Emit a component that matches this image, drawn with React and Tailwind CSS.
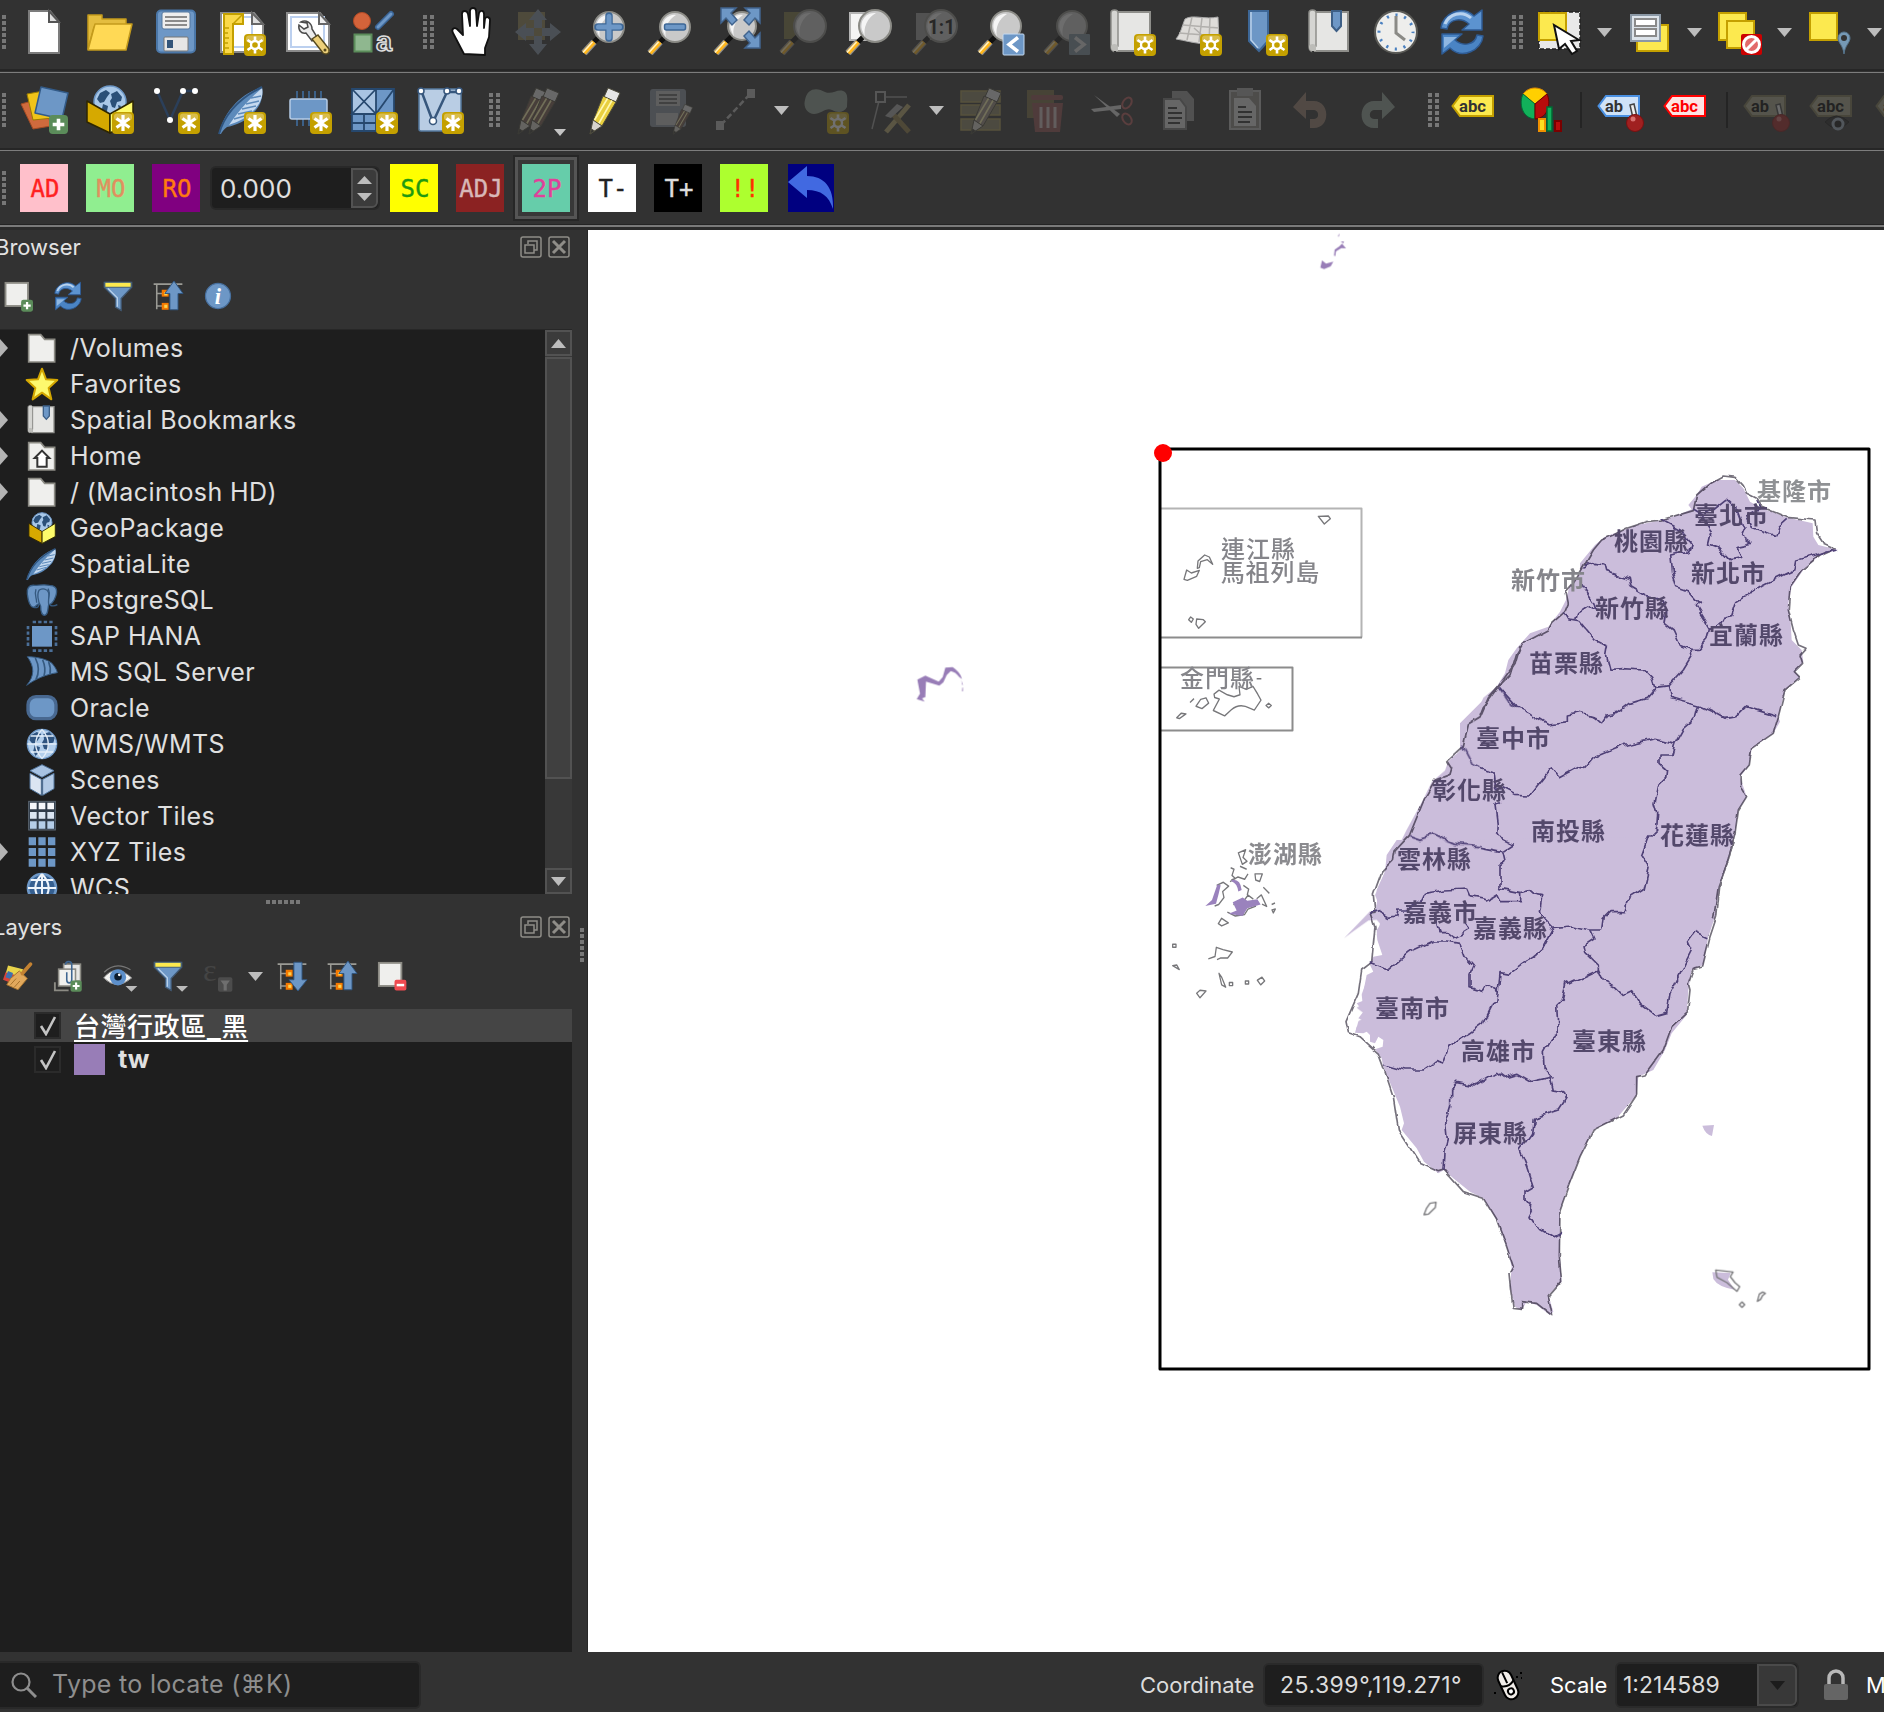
import React from "react";

const Svg = ({ size = 48, dim = false, children }) => (
  <svg
    width={size}
    height={size}
    viewBox="0 0 48 48"
    className={dim ? "shrink-0 overflow-visible opacity-30" : "shrink-0 overflow-visible"}
  >
    {children}
  </svg>
);

/* ---------- shared icon parts ---------- */
const Badge = () => (
  <g>
    <rect x="26" y="26" width="22" height="22" rx="4" fill="#c4a000" />
    <rect x="28" y="27.500" width="18" height="7" rx="3" fill="#d9bd4a" />
    <path d="M37 29v16M30.500 32.500l13 9M43.500 32.500l-13 9" stroke="#fff" strokeWidth="3.200" />
  </g>
);
const SunBadge = () => (
  <g>
    <rect x="26" y="26" width="22" height="22" rx="4" fill="#c4a000" />
    <rect x="28" y="27.500" width="18" height="7" rx="3" fill="#d9bd4a" />
    <path d="M37 28.500v17M29.500 32l15 10M44.500 32l-15 10" stroke="#fff" strokeWidth="2.600" />
    <circle cx="37" cy="37" r="4" fill="#c4a000" stroke="#fff" strokeWidth="2.400" />
  </g>
);
const PlusBadge = ({ x = 30, y = 30, s = 18 }) => (
  <g transform={`translate(${x} ${y}) scale(${s / 18})`}>
    <rect width="18" height="18" rx="3.500" fill="#5b8c5a" />
    <path d="M9 3.500v11M3.500 9h11" stroke="#fff" strokeWidth="3.400" />
  </g>
);
const Lens = ({ cx = 29, cy = 19, r = 15 }) => (
  <g>
    <path d="M19 29l-6 6" stroke="#111" strokeWidth="5" strokeLinecap="round" />
    <path d="M14 34L4 45" stroke="#8d8d8d" strokeWidth="7" />
    <path d="M14 34L4 45" stroke="#ffb61c" strokeWidth="4.500" />
    <path d="M12.500 34L3 44.500" stroke="#fff3c8" strokeWidth="1.500" />
    <circle cx={cx} cy={cy} r={r} fill="#c9c9c9" stroke="#8b8b86" strokeWidth="2" />
    <path d={`M${cx - r + 3} ${cy + 4}a${r - 3} ${r - 3} 0 0 1 ${r - 2} -${r + 1}a${r + 6} ${r + 6} 0 0 0 -${r - 5} ${r + 8}z`} fill="#f5f5f5" />
  </g>
);
const Globe = ({ cx = 24, cy = 14, r = 14 }) => (
  <g>
    <circle cx={cx} cy={cy} r={r} fill="#a9c8e8" stroke="#6d97c6" strokeWidth="1.500" />
    <g transform={`translate(${cx - 14} ${cy - 14})`} fill="#2b5078">
      <path d="M4 5l6-3 4 3-3 4-3 5-4 1-3-4z" />
      <path d="M7 16l5 2-1 5-3 3-2-5z" />
      <path d="M15 6l6-3 5 6-1 4-4 1-2 6-3-1-2-6 2-3z" />
      <path d="M22 17l3 1-2 4z" />
    </g>
  </g>
);
const BoxBody = () => (
  <g stroke="#2e2600" strokeWidth="1.500" strokeLinejoin="round">
    <path d="M1 15l23 13v19L1 36z" fill="#d6a900" />
    <path d="M47 15L24 28v19l23-11z" fill="#fdfb6b" />
  </g>
);
const Pencil = ({ body = "#e8cf3f" }) => (
  <g stroke="#4d4b3c" strokeWidth="1">
    <path d="M32 2l12 5-4 9-12-5z" fill="#e6e6e6" />
    <path d="M27 10l13 6-14 24-9-5z" fill={body} />
    <path d="M31.500 12.500L18.500 34M36 14.500L22.500 38" stroke="#fff8b0" strokeWidth="1.600" />
    <path d="M17 34l9 6-12 8z" fill="#d8d4cc" />
    <path d="M15.500 43l3 2-4.500 3z" fill="#333" />
  </g>
);
const Feather = () => (
  <g>
    <path d="M1 48C5 30 18 10 44 1c2 10-2 20-9 26-7 8-16 12-26 14-3 2-5 5-6 7z" fill="#5c8abb" />
    <path d="M44 2c2 9-3 18-10 24-7 7-15 10-23 13C20 26 30 14 44 2z" fill="#c5d9ef" />
    <path d="M16 33l14-4M20 28l14-3M24 23l14-3M28 18l13-3M33 12l10-2" stroke="#5c8abb" strokeWidth="1.500" />
    <path d="M1 48C6 30 20 13 44 1" fill="none" stroke="#2f5580" strokeWidth="2" />
  </g>
);
const Refresh = () => (
  <g strokeLinejoin="round">
    <path d="M3 20C4 6 24-4 36 8l8-6v20H24l7-6C23 9 11 11 9 21z" fill="#5c93d0" stroke="#2e5b94" strokeWidth="1.500" />
    <path d="M45 28C44 42 24 52 12 40l-8 6V26h20l-7 6c8 7 20 5 22-5z" fill="#4a84c4" stroke="#2e5b94" strokeWidth="1.500" />
    <path d="M7 16C11 6 24 2 33 10" fill="none" stroke="#b8d2ee" strokeWidth="3" />
    <path d="M6 40V29h13z" fill="#8fb7e2" />
  </g>
);
const Funnel = () => (
  <g>
    <path d="M2 2h44v8L29 28v19l-9-5V28L2 10z" fill="#6d97c6" stroke="#415a75" strokeWidth="2" />
    <path d="M8 12l15 15v14" fill="none" stroke="#b9d1ea" strokeWidth="2" />
    <rect x="3" y="2" width="42" height="8" fill="#fce94f" stroke="#3b5878" strokeWidth="1.500" />
  </g>
);
const Tree = ({ down }) => (
  <g>
    <path d="M1 5h46M6 5v40M6 20h12M6 40h12" fill="none" stroke="#9b9b95" strokeWidth="2.500" />
    <rect x="14" y="14" width="11" height="11" fill="#f57900" />
    <rect x="14" y="35" width="11" height="11" fill="#f57900" />
    <rect x="18" y="18" width="5" height="5" fill="#fcd34f" />
    <rect x="18" y="38" width="5" height="5" fill="#fcd34f" />
    {down ? (
      <path d="M27 2h13v28h8L33.500 48 19 30h8z" fill="#6d97c6" stroke="#2f5580" strokeWidth="1.500" />
    ) : (
      <path d="M27 46h13V20h8L33.500 0 19 20h8z" fill="#6d97c6" stroke="#2f5580" strokeWidth="1.500" />
    )}
  </g>
);
const Scroll = () => (
  <g>
    <path d="M9 4h33v39H9z" fill="#e6e6e4" stroke="#8e8e8a" strokeWidth="2" />
    <path d="M3 5c0-4 7-4 7 0v33c-4 0-6 2-5 5-2-1-2-3-2-5z" fill="#d5d5d2" stroke="#8e8e8a" strokeWidth="1.500" />
    <path d="M3 39c0-4 7-4 7 0v4H6c-2 0-3-2-3-4z" fill="#bdbdb9" />
  </g>
);
const Yellow = ({ x, y, w = 27, h = 27 }) => (
  <rect x={x} y={y} width={w} height={h} fill="#fce94f" stroke="#c4a000" strokeWidth="2" />
);
const Tag = ({ fill, stroke, text, label = "#333" }) => (
  <g>
    <path d="M9 10h33v20H9L1.500 20z" fill={fill} stroke={stroke} strokeWidth="2" />
    <text x="8" y="26" fontSize="16" fontWeight="700" fill={label} fontFamily="Roboto, sans-serif" textLength={text === "ab" ? 18 : 27} lengthAdjust="spacingAndGlyphs">
      {text}
    </text>
  </g>
);
const Pin = () => (
  <g>
    <path d="M29 19l4-1 3 13-4 1z" fill="#eee" stroke="#444" strokeWidth="1.500" />
    <circle cx="34" cy="37" r="8.500" fill="#a02020" stroke="#7a1010" strokeWidth="1" />
    <circle cx="32" cy="33" r="2.500" fill="#d87070" />
  </g>
);

/* ---------- toolbar icons ---------- */
const icons = {
  newDoc: (
    <g>
      <path d="M9 3h21l9 11v31H9z" fill="#fff" stroke="#7c7c7c" strokeWidth="2" />
      <path d="M29 3v11h10z" fill="#ddd" stroke="#555" strokeWidth="2" />
    </g>
  ),
  folder: (
    <g stroke="#c49b1c" strokeWidth="1.500" strokeLinejoin="round">
      <path d="M2 7h14v4h24v8H8L2 41z" fill="#e4bd3f" />
      <path d="M9 16h37l-6 26H2z" fill="#ffd955" />
    </g>
  ),
  save: (
    <g>
      <rect x="5" y="2.500" width="38" height="42" rx="4" fill="#6d97c6" stroke="#4b77a8" strokeWidth="2" />
      <rect x="10" y="4" width="28" height="17" rx="2" fill="#eee" stroke="#55789f" />
      <path d="M13 9h22M13 13h22M13 17h22" stroke="#6b6b6b" strokeWidth="1.500" />
      <rect x="12" y="29" width="24" height="14" rx="1" fill="#e6e6e6" stroke="#777" />
      <rect x="15" y="32" width="6" height="8" fill="#33557a" />
    </g>
  ),
  newLayout: (
    <g>
      <path d="M3 5h33l9 11v28H3z" fill="#fff" stroke="#8b8b8b" strokeWidth="2" />
      <path d="M7 9h27v30H7z" fill="none" stroke="#bcd0ef" strokeWidth="2" />
      <path d="M34 5v11h11z" fill="#ddd" stroke="#666" strokeWidth="2" />
      <path d="M6 6h19v10H15v30H6z" fill="#fbd949" stroke="#c4a000" strokeWidth="2" />
      <path d="M24 7L15 16M6 20h5M6 25h4M6 30h5M6 35h4M6 40h5" stroke="#c4a000" strokeWidth="1.500" />
      <SunBadge />
    </g>
  ),
  layoutMgr: (
    <g>
      <path d="M3 5h33l9 11v27H3z" fill="#fff" stroke="#8b8b8b" strokeWidth="2" />
      <path d="M7 9h33v30H7z" fill="none" stroke="#bcd0ef" strokeWidth="2" />
      <path d="M35 5v11h10z" fill="#eee" stroke="#666" strokeWidth="2" />
      <path d="M17 14c5-3 11 1 11 7l5 8-5 4-6-8c-5 1-8-3-7-8l5 4 4-2-1-4z" fill="#ececec" stroke="#4c4c4c" strokeWidth="1.500" />
      <path d="M28 31l6-4 11 14c1 5-3 6-6 4z" fill="#edd07a" stroke="#574a1e" strokeWidth="1.500" />
      <circle cx="41" cy="42" r="1.500" fill="#574a1e" />
    </g>
  ),
  style: (
    <g>
      <circle cx="12" cy="13" r="8.500" fill="#d4633a" stroke="#b34a25" />
      <path d="M28 19L41 6" stroke="#3b6698" strokeWidth="6" strokeLinecap="round" />
      <path d="M28 19L41 6" stroke="#6d97c6" strokeWidth="3" strokeLinecap="round" />
      <rect x="4.500" y="26.500" width="17" height="17" fill="#8fb78f" stroke="#5b8c5a" strokeWidth="2" />
      <text x="26" y="43" fontSize="27" fontWeight="700" fontFamily="Liberation Sans, sans-serif" fill="#444" stroke="#ddd" strokeWidth="1.500" textLength="16" lengthAdjust="spacingAndGlyphs">a</text>
    </g>
  ),
  hand: (
    <path
      d="M16 46L5 25c-2-4 1-6 4-4l6 6-1-21c0-4 5-4 6 0l2 12 0-15c0-4 6-4 6 0l1 15 2-13c1-3 5-3 5 1l0 14 1-9c1-3 5-2 5 1l-1 17-4 11v7z"
      fill="#fff" stroke="#111" strokeWidth="1.800" strokeLinejoin="round"
    />
  ),
  pan: (
    <g>
      <rect x="4" y="4" width="27" height="28" fill="#8f8450" />
      <path d="M24 1l9 11h-5v8h-8v-8h-5zM24 47l9-11h-5v-8h-8v8h-5zM1 24l11-9v5h8v8h-8v5zM47 24l-11-9v5h-8v8h8v5z" fill="#8494a8" />
    </g>
  ),
  zoomIn: (
    <g>
      <Lens />
      <path d="M29 8v22M18 19h22" stroke="#3d6797" strokeWidth="7.500" strokeLinecap="round" />
      <path d="M29 8.500v21M18.500 19h21" stroke="#6d97c6" strokeWidth="5" strokeLinecap="round" />
    </g>
  ),
  zoomOut: (
    <g>
      <Lens />
      <rect x="18.500" y="16" width="21" height="6" rx="2" fill="#6d97c6" stroke="#3d6797" strokeWidth="1.500" />
    </g>
  ),
  zoomFull: (
    <g>
      <Lens cx={30} cy={18} r={14} />
      <g fill="#6d97c6" stroke="#41648e" strokeWidth="1.500">
        <path d="M9 0h15l-5 5 6 7-5 5-6-7-5 5z" />
        <path d="M48 0H33l5 5-6 7 5 5 6-7 5 5z" />
        <path d="M48 40H33l5-5-6-7 5-5 6 7 5-5z" />
      </g>
    </g>
  ),
  zoomSel: (
    <g>
      <rect x="6" y="4" width="26" height="27" fill="#7d7540" />
      <Lens cx={32} cy={18} r={16} />
    </g>
  ),
  zoomLayer: (
    <g>
      <rect x="6" y="5" width="26" height="27" fill="#f4f4f4" stroke="#b5b5b5" strokeWidth="2" />
      <Lens cx={31} cy={18} r={16} />
    </g>
  ),
  zoomNative: (
    <g>
      <rect x="6" y="5" width="26" height="27" fill="#999" />
      <Lens cx={31} cy={18} r={16} />
      <text x="18" y="26" fontSize="21" fontWeight="700" fontFamily="Roboto, sans-serif" fill="#111" textLength="27" lengthAdjust="spacingAndGlyphs">1:1</text>
    </g>
  ),
  zoomLast: (
    <g>
      <Lens cx={30} cy={18} r={15} />
      <rect x="27" y="26" width="21" height="21" rx="1" fill="#6d97c6" stroke="#c5d9ef" />
      <path d="M42 29.500l-9 7 9 7" fill="none" stroke="#fff" strokeWidth="3.500" />
    </g>
  ),
  zoomNext: (
    <g>
      <Lens cx={30} cy={18} r={15} />
      <rect x="27" y="26" width="21" height="21" rx="1" fill="#7c8e9c" />
      <path d="M33 29.500l9 7-9 7" fill="none" stroke="#ddd" strokeWidth="3.500" />
    </g>
  ),
  newMap: <g><Scroll /><SunBadge /></g>,
  new3d: (
    <g>
      <path d="M11 11c8-5 20 1 33-2l1 24c-12 6-26 1-43-2 5-6 6-13 9-20z" fill="#dedcd9" stroke="#aaa" />
      <path d="M9 17l36 3M5 25l38 3M18 9l-5 23M28 10l-3 24M36 10l-1 24M20 20l9 8" stroke="#b2b0ad" strokeWidth="1.500" fill="none" />
      <SunBadge />
    </g>
  ),
  newBookmark: (
    <g>
      <path d="M9 3h19v30l-9 10-10-10z" fill="#6d97c6" stroke="#3d6797" strokeWidth="2" />
      <path d="M11 4v28l7 8" stroke="#b9d1ea" strokeWidth="1.500" fill="none" />
      <SunBadge />
    </g>
  ),
  bookmark: (
    <g>
      <Scroll />
      <path d="M26 3h9v15l-4.500 5-4.500-5z" fill="#6d97c6" stroke="#3d5f86" strokeWidth="2" />
    </g>
  ),
  clock: (
    <g>
      <circle cx="24" cy="24" r="21" fill="#eeeeec" stroke="#5b5b57" strokeWidth="2" />
      <circle cx="24" cy="24" r="17" fill="none" stroke="#4a80c0" strokeWidth="3" strokeDasharray="2.200 6.700" strokeDashoffset="1.100" />
      <path d="M24 8v17l9 7" fill="none" stroke="#8a8a86" strokeWidth="3" />
    </g>
  ),
  refresh: <Refresh />,
  select: (
    <g>
      <rect x="4" y="4" width="41" height="37" fill="#e8e8e8" stroke="#222" strokeWidth="1.500" strokeDasharray="4 2" />
      <Yellow x={4} y={5} />
      <path d="M19 17l5 24 6-5 7 10 5-3-6-10 8-1z" fill="#fff" stroke="#111" strokeWidth="2" />
    </g>
  ),
  selectForm: (
    <g transform="translate(2 0)">
      <Yellow x={10} y={17} w={31} h={26} />
      <rect x="4" y="7" width="29" height="26" fill="#dce3ea" stroke="#8b98a5" strokeWidth="2" />
      <path d="M8 11h21v7H8zM8 21h21v7H8z" fill="#fff" stroke="#8a8a8a" strokeWidth="2" />
    </g>
  ),
  deselect: (
    <g>
      <Yellow x={4} y={5} />
      <Yellow x={12} y={13} />
      <rect x="26" y="26" width="21" height="21" rx="2" fill="#cc0000" />
      <circle cx="36.500" cy="36.500" r="8" fill="#e26a6a" stroke="#fff" strokeWidth="3" />
      <path d="M31 42l11-11" stroke="#fff" strokeWidth="3" />
    </g>
  ),
  selectLoc: (
    <g>
      <Yellow x={5} y={5} />
      <path d="M39 46c-1-9-6-11-6-16a6 6 0 0 1 12 0c0 5-5 7-6 16z" fill="#7699b5" stroke="#56748c" />
      <circle cx="39" cy="30" r="3" fill="#333" />
    </g>
  ),
  dataSource: (
    <g strokeLinejoin="round">
      <path d="M1 18l22-6 8 28-18 3z" fill="#cf6a3d" stroke="#a24b23" strokeWidth="1" />
      <path d="M7 8l22-4 4 28-20 2z" fill="#f0c419" stroke="#9b7c00" strokeWidth="1" />
      <path d="M21 1l27 6-6 26-27-6z" fill="#6d97c6" stroke="#335b88" strokeWidth="1.500" />
      <PlusBadge x={29} y={29} s={19} />
    </g>
  ),
  geopackage: <g><Globe cx={24} cy={16} r={16} /><BoxBody /><Badge /></g>,
  shapefile: (
    <g>
      <path d="M5 5l13 29L31 5h12" fill="none" stroke="#2b3f5a" strokeWidth="2.500" />
      <g fill="#fff"><circle cx="5" cy="5" r="3" /><circle cx="18" cy="34" r="3" /><circle cx="31" cy="5" r="3" /><circle cx="43" cy="5" r="3" /></g>
      <Badge />
    </g>
  ),
  spatialite: <g><Feather /><Badge /></g>,
  memory: (
    <g>
      <path d="M13 12V5M19 12V5M25 12V5M31 12V5M37 12V5M13 33v7M19 33v7M25 33v7" stroke="#3c6087" strokeWidth="2" />
      <rect x="6" y="13" width="37" height="20" rx="2" fill="#6d97c6" stroke="#b5cce6" strokeWidth="1.500" />
      <Badge />
    </g>
  ),
  mesh: (
    <g>
      <path d="M2 3h42v42H2z" fill="#6d97c6" />
      <path d="M2 3h24v25H2z" fill="#a9c4e2" />
      <path d="M2 3h42v42H2zM26 3v42M2 28h42M2 3l24 25L2 28 26 3M26 28L44 3M14 28v17M2 37h24" fill="none" stroke="#26486e" strokeWidth="1.800" />
      <Badge />
    </g>
  ),
  virtual: (
    <g>
      <rect x="3" y="3" width="42" height="42" rx="2" fill="#b9cde4" stroke="#55799f" strokeWidth="1.500" />
      <path d="M5 4l12 32L31 6l12 0" fill="none" stroke="#37577d" strokeWidth="2.500" />
      <g fill="#fff" stroke="#37577d" strokeWidth="1.500"><circle cx="5" cy="5" r="3" /><circle cx="17" cy="35" r="3.500" /><circle cx="31" cy="5" r="3" /><circle cx="43" cy="5" r="3" /></g>
      <Badge />
    </g>
  ),
  pencils: (
    <g>
      <g transform="translate(-11 0)"><Pencil body="#7a5a4e" /></g>
      <Pencil body="#7a5a4e" />
    </g>
  ),
  pencil: <g transform="translate(-5 0)"><Pencil /></g>,
  saveEdits: (
    <g>
      <rect x="3" y="3" width="36" height="38" rx="3" fill="#8a93a0" />
      <rect x="9" y="5" width="24" height="15" fill="#c4c4c4" />
      <path d="M12 9h18M12 13h18M12 17h18" stroke="#444" strokeWidth="1.500" />
      <rect x="9" y="27" width="22" height="12" fill="#c4c4c4" />
      <g transform="translate(17 17) scale(.65)"><Pencil body="#7a5a4e" /></g>
    </g>
  ),
  digitize: (
    <g>
      <path d="M8 39L38 7" stroke="#bbb" strokeWidth="2.500" strokeDasharray="6 3" />
      <rect x="3" y="35" width="8" height="9" fill="#bbb" />
      <rect x="34" y="3" width="8" height="9" fill="#bbb" />
    </g>
  ),
  blob: (
    <g>
      <path d="M4 14C6 2 16 1 24 6c7 3 12-3 18-1 6 2 4 10 4 16-3 6-10 6-15 3-6-3-11 4-18 4C6 28 2 21 4 14z" fill="#91a195" />
      <SunBadge />
    </g>
  ),
  vertex: (
    <g transform="translate(2 0)">
      <path d="M11 11h27M11 11L3 43" stroke="#999" strokeWidth="1.500" />
      <rect x="7" y="6" width="9" height="10" fill="#333" stroke="#aaa" strokeWidth="2" />
      <path d="M17 46l23-27" stroke="#b8a86a" strokeWidth="5" />
      <path d="M40 46L22 26" stroke="#8f7b45" strokeWidth="5" />
      <path d="M16 30l12-12 6 3-12 11z" fill="#aaa" />
    </g>
  ),
  table: (
    <g>
      <path d="M4 5h39v11H4zM4 19h39v10H4zM4 33h39v11H4z" fill="#8a8360" stroke="#a99b55" strokeWidth="1.500" />
      <Pencil body="#9b8b80" />
    </g>
  ),
  trash: (
    <g>
      <path d="M4 4h27v28H4z" fill="#7a6d40" />
      <rect x="8" y="9" width="32" height="5" rx="2" fill="#945050" />
      <path d="M9 17h31l-3 29H12z" fill="#945050" />
      <path d="M18 21v21M25 21v21M32 21v21" stroke="#d0c0c0" strokeWidth="3" />
    </g>
  ),
  cut: (
    <g transform="translate(1 0)">
      <path d="M4 9l26 19-3 3z" fill="#ddd" />
      <path d="M1 23l30-4v4L4 26z" fill="#ddd" />
      <ellipse cx="37" cy="17" rx="4" ry="6" transform="rotate(35 37 17)" fill="none" stroke="#b85a5a" strokeWidth="2" />
      <ellipse cx="37" cy="33" rx="4" ry="6" transform="rotate(-35 37 33)" fill="none" stroke="#b85a5a" strokeWidth="2" />
    </g>
  ),
  copy: (
    <g>
      <path d="M17 5h15l7 8v22H17z" fill="#999" />
      <path d="M9 13h16l6 8v22H9z" fill="#ddd" stroke="#777" strokeWidth="2" />
      <path d="M13 22h9M13 27h14M13 32h14M13 37h12" stroke="#333" strokeWidth="1.800" />
    </g>
  ),
  paste: (
    <g transform="translate(1 0)">
      <path d="M8 5h30v38H8z" fill="#8c8984" stroke="#bbb" strokeWidth="2" />
      <rect x="15" y="2" width="16" height="8" fill="#aaa" />
      <path d="M12 12h15l7 8v20H12z" fill="#ddd" />
      <path d="M16 21h8M16 26h14M16 31h14M16 36h12" stroke="#333" strokeWidth="1.800" />
    </g>
  ),
  undo: <path d="M6 21L19 6v9h8c16 0 17 27 0 27h-4v-9h4c6 0 5-9 0-9h-8v9z" fill="#9b8070" />,
  redo: <path d="M42 21L29 6v9h-8C5 15 4 42 21 42h4v-9h-4c-6 0-5-9 0-9h8v9z" fill="#96a79c" />,
  label: <Tag fill="#fce94f" stroke="#c4a000" text="abc" />,
  diagram: (
    <g>
      <path d="M18 18L6 8c6-8 18-8 24 0z" fill="#ffcf00" stroke="#e08a00" />
      <path d="M18 18v15C4 32 2 16 6 8z" fill="#12b05a" stroke="#006a35" />
      <path d="M18 18v15c14-1 16-17 12-25z" fill="#b80c0c" stroke="#6a0000" />
      <rect x="22" y="33" width="6" height="12" fill="#ffdf20" stroke="#f09000" strokeWidth="2" />
      <rect x="30" y="21" width="5" height="24" fill="#12b05a" stroke="#006a35" strokeWidth="1.500" />
      <rect x="38" y="35" width="6" height="10" fill="#b80c0c" stroke="#7a0000" strokeWidth="2" />
    </g>
  ),
  labelPin: <g><Tag fill="#cfe2f8" stroke="#4a90e2" text="ab" /><g transform="translate(4 0)"><Pin /></g></g>,
  labelRed: <Tag fill="#fde4e4" stroke="#f00" text="abc" label="#f00" />,
  labelPinDim: <g><Tag fill="#a5a488" stroke="#7c7550" text="ab" label="#000" /><g transform="translate(4 0)"><Pin /></g></g>,
  labelEye: (
    <g>
      <Tag fill="#a5a488" stroke="#7c7550" text="abc" label="#000" />
      <path d="M16 36q11-12 24 0-12 13-24 0z" fill="#222" stroke="#111" />
      <circle cx="29" cy="38" r="5" fill="#111" stroke="#9ab" strokeWidth="3" />
    </g>
  ),
  /* panel icons */
  addLayer: <g><rect x="4" y="3" width="36" height="37" fill="#efefed" stroke="#8c8b84" strokeWidth="3" /><PlusBadge x={29} y={30} s={19} /></g>,
  removeLayer: (
    <g transform="translate(-1 0)">
      <rect x="4" y="3" width="36" height="37" fill="#efefed" stroke="#8c8b84" strokeWidth="3" />
      <rect x="29" y="30" width="19" height="17" rx="3" fill="#ef4a50" />
      <path d="M32.500 38.500h12" stroke="#fff" strokeWidth="4" />
    </g>
  ),
  funnel: <Funnel />,
  collapse: <Tree />,
  expand: <Tree down />,
  info: (
    <g>
      <circle cx="24" cy="24" r="20" fill="#6d97c6" stroke="#47709f" strokeWidth="2" />
      <text x="24" y="36" fontSize="36" fontStyle="italic" fontWeight="700" fontFamily="Liberation Serif, serif" fill="#fff" textAnchor="middle">i</text>
    </g>
  ),
  brush: (
    <g>
      <path d="M8 7l24 6-2 12-26-4z" fill="#e9d44a" />
      <path d="M4 18l14 4-3 14L0 30z" fill="#d9433a" />
      <path d="M8 16l8 3-3 10-9-3z" fill="#3f72b0" />
      <path d="M12 28l14-12 13 12-15 18L6 38z" fill="#e2a95c" stroke="#a3702b" strokeWidth="1.500" />
      <path d="M31 20L44 5" stroke="#c48232" strokeWidth="6" strokeLinecap="round" />
      <path d="M12 38l9-10M18 42l9-10" stroke="#a3702b" strokeWidth="1.500" />
    </g>
  ),
  addGroup: (
    <g>
      <path d="M3 34v13h22" fill="none" stroke="#8c8b84" strokeWidth="3" />
      <rect x="17" y="5" width="27" height="27" fill="#e8e8e6" stroke="#8c8b84" strokeWidth="2.500" />
      <rect x="9" y="13" width="27" height="27" fill="#f1f1ef" stroke="#8c8b84" strokeWidth="2.500" />
      <path d="M22 18v12q0 5 4 5t4-5V6q0-5-5-5t-5 5" fill="none" stroke="#3f6691" strokeWidth="2.500" />
      <PlusBadge x={28} y={31} s={18} />
    </g>
  ),
  eye: (
    <g>
      <path d="M1 27Q20 3 46 27 22 48 1 27z" fill="#f2f2f0" stroke="#888" strokeWidth="1.500" />
      <circle cx="24" cy="26" r="13" fill="#5c8fca" />
      <circle cx="24" cy="25" r="6" fill="#0d1b2c" />
      <circle cx="26" cy="22" r="2.200" fill="#fff" />
      <path d="M2 18Q20 0 44 14" fill="none" stroke="#777" strokeWidth="2" />
      <path d="M36 40h19l-9.500 9z" fill="#bbb" />
    </g>
  ),
  funnelMenu: <g><Funnel /><path d="M37 40h19l-9.500 9z" fill="#bbb" /></g>,
  exprFilter: (
    <g>
      <text x="0" y="32" fontSize="52" fontFamily="Liberation Serif, serif" fill="#444">ε</text>
      <rect x="24" y="26" width="23" height="23" rx="3" fill="#4c4c4c" />
      <path d="M28 31h15l-5 7v9h-5v-9z" fill="#6f6f6f" />
    </g>
  ),
  /* tree icons */
  dir: <path d="M4 4h18l6 7h15v34H4z" fill="#efefed" stroke="#8c8b84" strokeWidth="2.500" />,
  home: (
    <g>
      <path d="M4 4h18l6 7h15v34H4z" fill="#efefed" stroke="#8c8b84" strokeWidth="2.500" />
      <path d="M13 27L24 16l11 11h-4v13H17V27z" fill="#fff" stroke="#333" strokeWidth="3" />
    </g>
  ),
  star: <path d="M24 1l6 16 17 1-13 12 4 17-14-10-14 10 4-17L1 18l17-1z" fill="#fdf96e" stroke="#d3a600" strokeWidth="3" strokeLinejoin="round" />,
  gpkg: <g><Globe cx={24} cy={16} r={15} /><g transform="translate(3.500 3) scale(.86 .94)"><BoxBody /></g></g>,
  feather: <Feather />,
  postgres: (
    <g fill="#6d97c6" stroke="#35597f" strokeWidth="2" strokeLinejoin="round">
      <path d="M13 2C4 1 1 7 2 15c1 9 4 19 9 20 4 0 4-4 8-5h11c6 4 12-3 15-13 3-11-2-15-10-15-8-2-15 0-22 0z" />
      <path d="M15 8c-3 8 1 12 1 20M33 7c5 9-1 14 0 22" fill="none" />
      <path d="M20 9c5-3 12-2 14 4 1 6-1 12 0 18-2 7 0 15-6 16-5 0-6-6-6-14-4-6-6-19-2-24z" />
      <path d="M11 35q8 2 8-4M36 32q6 2 11-1" fill="none" />
    </g>
  ),
  hana: (
    <g>
      <rect x="9" y="9" width="30" height="31" fill="#6d97c6" />
      <path d="M10 3h30M10 46h30" stroke="#4b6f98" strokeWidth="4" strokeDasharray="5 3.300" />
      <path d="M3 9v32M45 9v32" stroke="#4b6f98" strokeWidth="4" strokeDasharray="5 3.300" />
    </g>
  ),
  mssql: (
    <g fill="#6d97c6" stroke="#35597f" strokeWidth="1.500">
      <path d="M2 1c14 0 30 4 37 10 4 5 7 9 8 14C33 27 16 33 1 44c12-14 12-28 1-43z" />
      <path d="M14 3c6 12 6 22 1 32M25 6c4 9 4 17 2 24M34 9c3 7 3 12 2 18" fill="none" strokeWidth="2.500" />
    </g>
  ),
  oracle: <rect x="3" y="7" width="42" height="33" rx="12" fill="#6d97c6" stroke="#486890" strokeWidth="5" />,
  wms: (
    <g>
      <circle cx="24" cy="24" r="22" fill="#b3cfec" stroke="#6d97c6" strokeWidth="2" />
      <g fill="#2f5480">
        <path d="M7 11l9-5 7 3-3 6-5 7-5 2-5-6z" />
        <path d="M13 26l8 3-2 8-5 5-3-8z" />
        <path d="M26 9l9-3 8 9-2 7-6 1-3 10-5-2-3-9 3-5z" />
      </g>
      <path d="M2 24h44M7 12h34M7 36h34M24 2Q5 24 24 46M24 2Q43 24 24 46" fill="none" stroke="#e4eef9" strokeWidth="2" />
    </g>
  ),
  scenes: (
    <g stroke="#52759c" strokeWidth="1.500" strokeLinejoin="round">
      <path d="M24 1l18 9-18 10L6 10z" fill="#a8c3e3" />
      <path d="M6 14l17 9v24L6 37z" fill="#dbe5f2" />
      <path d="M42 14l-17 9v24l17-10z" fill="#b4cbe6" />
    </g>
  ),
  vtiles: (
    <g>
      <rect x="4" y="2" width="40" height="43" fill="#2f3b49" stroke="#5c6772" strokeWidth="1.500" />
      <path d="M6 4h10v10H6zM19 4h10v10H19zM32 4h10v10H32z" fill="#f5f7fa" />
      <path d="M6 18h10v10H6zM19 18h10v10H19zM32 18h10v10H32z" fill="#dae5f2" />
      <path d="M6 32h10v11H6zM19 32h10v11H19zM32 32h10v11H32z" fill="#b4cde8" />
    </g>
  ),
  xyz: (
    <path d="M4 2h11v12H4zM18.500 2h11v12h-11zM33 2h11v12H33zM4 18h11v12H4zM18.500 18h11v12h-11zM33 18h11v12H33zM4 34h11v12H4zM18.500 34h11v12h-11zM33 34h11v12H33z" fill="#6d97c6" />
  ),
  wcs: (
    <g>
      <circle cx="24" cy="24" r="21" fill="#355f90" stroke="#6d97c6" strokeWidth="4" />
      <path d="M3 24h42M24 3v42M7 12h34M24 3Q4 24 24 45M24 3Q44 24 24 45" fill="none" stroke="#eef4fb" strokeWidth="3" />
    </g>
  ),
};

/* ---------- toolbar primitives ---------- */
const Dots = ({ cols, rows }) => (
  <div className={cols === 2 ? "grid grid-cols-2 gap-x-[3px] gap-y-[2px]" : "grid grid-cols-1 gap-y-[2px]"}>
    {Array.from({ length: cols * rows }, (_, i) => (
      <i key={i} className="block size-1 bg-[#777]" />
    ))}
  </div>
);
const Tool = ({ name, dim }) => (
  <div className="flex w-[66px] shrink-0 justify-center">
    <Svg dim={dim}>{icons[name]}</Svg>
  </div>
);
const Arrow = ({ className = "w-6" }) => (
  <div className={`flex shrink-0 justify-center ${className}`}>
    <svg width="15" height="9" viewBox="0 0 15 9"><path d="M0 0h15L7.500 9z" fill="#bdbdbd" /></svg>
  </div>
);
const Grip = ({ className }) => (
  <div className={`flex shrink-0 items-center ${className}`}><Dots cols={2} rows={6} /></div>
);
const EdgeGrip = () => (
  <div className="flex w-[11px] shrink-0 items-center pl-0.5"><Dots cols={1} rows={6} /></div>
);
const Sep = () => <div className="mx-[6px] h-9 w-0.5 shrink-0 bg-[#242424]" />;

const Square = ({ className, children }) => (
  <div className="flex w-[66px] shrink-0 justify-center">
    <div className={`flex size-12 items-center justify-center pt-0.5 pl-0.5 font-['DejaVu_Sans_Mono',monospace] text-[24px] [-webkit-text-stroke:0.4px_currentColor] ${className}`}>{children}</div>
  </div>
);

/* ---------- docks ---------- */
const DockTitle = ({ text, className }) => (
  <div className="flex h-[34px] items-center justify-between pr-[14px]">
    <span className={`text-[22px] leading-7 text-[#e2e2e2] ${className}`}>{text}</span>
    <div className="flex gap-[6px]">
      <svg width="22" height="22" viewBox="0 0 22 22" fill="none" stroke="#8f8d88" strokeWidth="1.500">
        <rect x="1" y="1" width="20" height="20" rx="2" />
        <path d="M8 8V5h9v9h-3M5 9h9v8H5z" />
      </svg>
      <svg width="22" height="22" viewBox="0 0 22 22" fill="none" stroke="#8f8d88">
        <rect x="1" y="1" width="20" height="20" rx="2" strokeWidth="1.500" />
        <path d="M5 5l12 12M17 5L5 17" strokeWidth="3" />
      </svg>
    </div>
  </div>
);
const PanelTool = ({ name }) => (
  <div className="flex w-[50px] shrink-0 justify-center"><Svg size={30}>{icons[name]}</Svg></div>
);

const tree = [
  ["dir", "/Volumes", true],
  ["star", "Favorites"],
  ["bookmark", "Spatial Bookmarks", true],
  ["home", "Home", true],
  ["dir", "/ (Macintosh HD)", true],
  ["gpkg", "GeoPackage"],
  ["feather", "SpatiaLite"],
  ["postgres", "PostgreSQL"],
  ["hana", "SAP HANA"],
  ["mssql", "MS SQL Server"],
  ["oracle", "Oracle"],
  ["wms", "WMS/WMTS"],
  ["scenes", "Scenes"],
  ["vtiles", "Vector Tiles"],
  ["xyz", "XYZ Tiles", true],
  ["wcs", "WCS"],
];

const ScrollButton = ({ up }) => (
  <div className="flex h-[26px] items-center justify-center border-2 border-[#525252] bg-[#3b3b3b]">
    <svg width="15" height="9" viewBox="0 0 15 9"><path d={up ? "M0 9h15L7.500 0z" : "M0 0h15L7.500 9z"} fill="#bdbdbd" /></svg>
  </div>
);

const Check = () => (
  <div className="flex size-[27px] items-center justify-center border-2 border-[#2b2b2b] bg-[#1e1e1e]">
    <svg width="18" height="20" viewBox="0 0 18 20"><path d="M2 10l5 8L16 1" fill="none" stroke="#c4c4c4" strokeWidth="2.600" /></svg>
  </div>
);

/* ---------- map ---------- */
const labels = [
  [1794, 491, "基隆市", "#8f9194"], [1731, 515, "臺北市"], [1651, 541, "桃園縣"], [1728, 573, "新北市"],
  [1548, 580, "新竹市", "#85858b"], [1632, 608, "新竹縣"], [1746, 635, "宜蘭縣"], [1566, 663, "苗栗縣"],
  [1513, 738, "臺中市"], [1469, 790, "彰化縣"], [1568, 831, "南投縣"], [1697, 835, "花蓮縣"],
  [1434, 859, "雲林縣"], [1440, 912, "嘉義市"], [1510, 928, "嘉義縣"], [1412, 1008, "臺南市"],
  [1498, 1051, "高雄市"], [1609, 1041, "臺東縣"], [1490, 1133, "屏東縣"], [1285, 854, "澎湖縣", "#8b8b8f"],
  [1258, 549, "連江縣", "#85858a"], [1270, 572, "馬祖列島", "#85858a"], [1217, 678, "金門縣", "#85858a"],
];

const NW = "translate(1140 430) scale(.33333 .38265)";
const NE = "translate(1480 440) scale(.33333)";
const SO = "translate(1320 840) scale(.33333)";
const TOP = "translate(900 225) scale(.33333)";

const MapCanvas = () => (
  <svg width="1296" height="1422" viewBox="588 230 1296 1422" className="block isolate shrink-0 bg-white" strokeLinejoin="round">
    <defs>
      <filter id="wiggle" filterUnits="userSpaceOnUse" x="1160" y="440" width="720" height="940">
        <feTurbulence type="fractalNoise" baseFrequency="0.07" numOctaves="2" seed="4" />
        <feDisplacementMap in="SourceGraphic" scale="9" xChannelSelector="R" yChannelSelector="G" />
      </filter>
      <filter id="wiggleSoft" filterUnits="userSpaceOnUse" x="1160" y="440" width="720" height="940">
        <feTurbulence type="fractalNoise" baseFrequency="0.08" numOctaves="2" seed="9" />
        <feDisplacementMap in="SourceGraphic" scale="4" xChannelSelector="R" yChannelSelector="G" />
      </filter>
    </defs>

    {/* coastline */}
    <g fill="none" stroke="#75717c" strokeWidth="5" filter="url(#wiggleSoft)">
      <path transform={NE} d="M0 825L10 800 55 740 90 705 110 640 130 610 205 570 215 550 255 515 265 490 258 455 280 430 305 390 340 330 365 300 400 285 440 265 500 245 545 240 640 212 650 165 690 130 730 108 765 112 790 140 800 160 830 175 845 200 920 232 1005 240 1010 280 1030 310 1065 325 1020 345 965 390 930 440 925 510 940 570 955 615 978 625 960 645 968 670 943 695 960 712 915 750 895 830 880 880 815 925 808 975 783 1005 785 1045 800 1070 775 1110 765 1180 745 1260 715 1340 700 1440" />
      <path transform={NW} d="M1140 565L1125 610 1075 670 1045 700 1020 750 985 768 970 825 920 865 935 885 930 900 885 915 855 960 808 1060 765 1100 760 1125 725 1155 700 1215 705 1260 690 1262 705 1300 695 1390" />
      <path transform={SO} d="M155 367L125 390 115 460 78 545 85 578 120 590 175 640 190 680 220 770 235 870 300 970 355 995 372 990 430 1055 490 1075 530 1140 560 1220 580 1280 567 1300 572 1350 580 1405 605 1408 605 1385 650 1390 698 1428 685 1370 725 1325 718 1250 720 1110 745 1040 780 950 820 870 910 825 950 765 950 710 975 705 1030 630 1055 560 1103 515 1110 450 1105 430 1120 385 1148 378 1170 290 1190 230 1200 130 1225 60 1240 0" />
    </g>

    <g fill="#cbbddb" className="mix-blend-multiply">
      <path transform={NE} d="M-60 850L0 790 50 740 75 700 85 660 110 625 150 580 205 560 240 515 258 480 268 440 300 400 300 370 345 315 375 290 470 255 550 240 600 222 635 208 625 195 650 165 665 140 710 120 765 120 790 145 810 185 845 205 920 232 998 250 1000 290 1015 315 1055 325 1075 330 1020 345 970 390 935 440 925 490 932 550 935 600 965 630 970 665 945 695 960 712 915 750 895 830 900 845 880 880 815 925 808 975 780 1010 800 1070 775 1110 765 1180 745 1260 715 1340 700 1440-60 1440z" />
      <path transform={NW} d="M1145 560L1120 590 1100 650 1030 700 1000 760 970 810 970 830 925 865 915 890 875 920 850 965 800 1045 780 1080 745 1110 735 1155 705 1215 712 1230 705 1260 690 1258 612 1328 640 1310 685 1282 710 1280 720 1290 710 1320 730 1375 700 1385 695 1400 705 1410 680 1440 665 1475 668 1500 650 1510 680 1530 655 1545 648 1568 1145 1568z" />
      <path transform={SO} d="M230 0L200 45 195 95 170 150 172 200 185 250 170 270 172 300 187 345 160 350 150 375 160 395 140 405 130 455 135 480 110 490 130 515 115 535 140 545 110 560 105 578 130 580 140 575 150 585 150 605 165 610 175 590 190 600 188 620 165 628 185 655 190 680 215 740 240 800 252 850 245 870 290 925 312 965 355 1000 372 990 400 1015 450 1055 490 1075 530 1140 560 1220 575 1280 570 1340 585 1400 605 1410 620 1385 650 1395 690 1425 700 1415 685 1365 725 1325 720 1250 720 1110 745 1040 780 950 820 870 890 835 950 765 955 710 1000 690 1035 630 1055 580 1100 525 1105 450 1115 390 1150 375 1165 290 1185 230 1200 130 1225 60 1240-10z" />
      <path transform={SO} d="M1147 857l35-2-6 33q-20-5-29-31zM1177 1297l55 2-8 20 20 30q-50-8-64-32z" />
    </g>

    {/* county borders */}
    <g fill="none" stroke="#4f4177" strokeWidth="5" filter="url(#wiggle)">
      <path transform={NE} d="M545 240L600 270 630 310 620 335 572 345 578 400 590 440 625 452 658 490 648 500 688 565M688 565L720 555 730 535 755 530 770 485 850 435 915 402 945 388 950 360 1065 330M688 565L680 600 655 628 632 628 635 650 610 690 565 740M310 385L345 370 375 375 380 395 445 415 450 440 500 470 545 478 560 520 555 550 580 570 600 615 632 628M305 430L345 490 350 510 320 495 290 515 285 540M255 515L270 540 300 545 345 600 385 620 380 650 390 688 430 686 490 690 515 715 525 745 565 740M55 740L110 800 150 820 205 855 265 848 265 825 300 817 345 830 365 848 380 825 410 820 450 790 500 775 525 745M565 740L572 772 600 780 655 795 700 815 735 835 765 830 795 800 895 830M655 795L645 835 610 865 585 910 525 895 440 915 400 930 340 955 315 985 290 980 235 1010 215 985 150 1068 100 1066 60 1045M585 910L575 945 540 945 540 970 563 990 560 1015 535 1040 525 1090 533 1120 530 1165 505 1190 485 1245 510 1285 495 1350 440 1385 435 1415 390 1415 365 1440M0 985L45 1000 50 1040 80 1055M60 1085L45 1095 52 1150 50 1175 65 1195 100 1212 65 1235 72 1265 60 1275 60 1345 125 1358M0 1222L65 1235M640 210L665 225 670 250 695 285 688 315 715 325 750 362 785 355 768 320 815 310 785 290 795 265 775 210 740 178 700 210 670 225M830 180L840 205 800 225 815 265 885 290 895 255 920 232" />
      <path transform={NW} strokeWidth="4.700" d="M1075 670L1110 715 1140 728M970 825L1000 875 1020 882M808 1060L840 1070 880 1058 940 1080 1020 1087" />
      <path transform={SO} d="M150 220L175 215 205 232 230 228 235 210 260 210 300 180 310 160 375 150 440 147 450 170 505 180 530 165 540 185 605 185 605 158M605 158L625 152 640 165 665 170 658 220 700 262 755 258 810 270 845 270 850 235M812 272L825 300 795 320 800 340 835 375 835 390 850 425 880 440 910 470 935 458 960 495 1005 530 1040 520 1050 460 1075 410 1115 330 1105 310 1130 275 1165 290M835 390L740 435 730 480 710 500 715 580 690 605 670 640 672 685 700 715M700 262L665 330 640 350 570 400 540 395 535 455 530 485 520 490 490 550 450 580 390 615 370 672 345 665 310 690 255 690 190 672M535 455L500 435 490 452 450 440 450 400 460 378 435 350 420 310 380 303 340 303 270 335 205 388 155 368M350 240L360 275 380 275 400 290 425 278 445 265 430 245M372 990L375 940 385 900 380 850 395 800 395 745 410 727 465 738 530 697 550 712 590 700 635 725 690 712 700 750 730 755 738 775 715 810 640 835 635 880 600 930 620 980 640 1040 615 1055 615 1080 640 1110 630 1130 650 1160 700 1190 720 1180" />
    </g>

    {/* islands */}
    <g fill="none" stroke="#77777a" strokeWidth="4">
      <path transform={SO} d="M330 1090l18-3-2 15-20 20-14 2 8-20zM1187 1290l4 22 30 16 30 26 8-14-14-12-14-18 8-14zM1258 1394l8-8 8 8-8 8zM1312 1384l6-22 10-6 8 4-8 6-6 12z" />
      <g transform={TOP}>
        <path d="M1255 874l30-1 6 8-18 16zM860 1035l-8 28 10 3 28-12 8-18-24 8zM892 1030l2-22 20-18 14 6 10 22-16-14-20 6-4 18zM866 1184l6-8 8 6-6 10zM890 1182l20 2 6 6-20 20-8-12z" />
      </g>
      <g transform={NW} strokeWidth="3.800">
        <path d="M222 690l15-10 25 12 20 5 18-5-3-22 22 8 20-8 14 20 10 16-20 26-14-5q-30-15-55 4l-20 16-34-14 18-30-14-4zM350 650h14M378 720l8-6 8 6-8 6zM168 722l14-18 16-4 8 14-20 14zM150 712l12-10M110 752l14-12 14 2-20 12z" />
        <path d="M295 1105l22-8-8 20 12 10-14 8zM272 1144l10 4-6 16 10 8-12 4M300 1140l20 8M230 1190l20-8 16 10-18 14 4 16-16 18-12 4M270 1180l24-12 20 6 10-14M345 1160h22l-8 20-12-4zM310 1190l16 10-4 14 18 12M370 1195l18 16M350 1225l14-10 16 30-14-6M280 1240l30-8 14-16M262 1260l24 10 28-4 10-14 24-8M235 1290l10-14 20 12-20 8zM395 1240l10-4M396 1254l10-2-6 10zM98 1344h10v8H98zM98 1400l20 10-8-12zM205 1382l20-6 4-24 20 6 28 6-14 16-22 0-10 4M237 1420l8 30 12 6-12-26zM268 1444h10v8h-10zM316 1440h10v8h-10zM352 1438l14-8 8 10-12 10zM170 1472l10-8 18 2-18 18z" />
      </g>
    </g>
    <g transform={NW} fill="#9a82bd">
      <path d="M232 1188l10 2-6 22-8 26-32 6 20-16zM275 1176q26-4 30 26l-10 4q-4-22-20-26zM278 1234l30-12 14 8 30-4 10 14-40 10-14 20-42-6 24-8z" />
    </g>
    <g transform={TOP} fill="#987db7">
      <path d="M52 1364l24-12 40 18 12-14 8-28 22-2q24 16 28 36l-8-6q-12-16-26-18l-12 12-10 22-12 10-40-12-2 46-10 4 8 10-24-8 10-16zM184 1366l5 14-3-1zM187 1388h2v10l-3 1zM1314 32l5-7-3 11zM1322 50l10-1-2 6zM1302 92l2-18 14-10 8-8 12 14-14-1-16 10-2 14zM1266 106l12 10 22-6-8 14-20 8-11-4z" />
    </g>

    {/* inset frames */}
    <g fill="none" strokeWidth="2">
      <path d="M1161 508.500h200.500V637.400" stroke="#b4b4b4" />
      <path d="M1161 637.400h201M1161 667.500h131.500v63H1161" stroke="#8c8c8c" />
    </g>

    <g fontFamily="'Noto Sans CJK TC', sans-serif" fontSize="24" textAnchor="middle">
      {labels.map(([x, y, t, c]) => (
        <text key={t} x={x} y={y + 9} fill={c || "#53486b"} fontWeight={c && y > 540 && y < 700 && x < 1300 ? 500 : 700} textLength={t.length * 24.600} lengthAdjust="spacing">{t}</text>
      ))}
    </g>

    <rect x="1160" y="449" width="709" height="920" fill="none" stroke="#000" strokeWidth="3" />
    <circle cx="1163" cy="453" r="9" fill="#f00" />
  </svg>
);

export default function App() {
  return (
    <div className="flex h-[1712px] w-[1884px] flex-col overflow-hidden bg-[#323232] font-['Inter',sans-serif]">
      {/* project + navigation toolbar */}
      <div className="flex h-[73px] shrink-0 flex-col overflow-hidden border-b border-[#7d7d7d]">
        <div className="flex h-[64px] items-center">
          <EdgeGrip />
          {["newDoc", "folder", "save", "newLayout", "layoutMgr", "style"].map((n) => <Tool key={n} name={n} />)}
          <Grip className="w-[32px] pl-4" />
          <Tool name="hand" /><Tool name="pan" dim /><Tool name="zoomIn" /><Tool name="zoomOut" /><Tool name="zoomFull" />
          <Tool name="zoomSel" dim /><Tool name="zoomLayer" /><Tool name="zoomNative" dim /><Tool name="zoomLast" /><Tool name="zoomNext" dim />
          <Tool name="newMap" /><Tool name="new3d" /><Tool name="newBookmark" /><Tool name="bookmark" /><Tool name="clock" /><Tool name="refresh" />
          <Grip className="w-[31px] pl-[17px]" />
          <Tool name="select" /><Arrow /><Tool name="selectForm" /><Arrow /><Tool name="deselect" /><Arrow /><Tool name="selectLoc" /><Arrow />
        </div>
        <div className="mt-[5px] h-0.5 w-full bg-[#262626]" />
      </div>

      {/* data source + digitizing + label toolbar */}
      <div className="flex h-[78px] shrink-0 flex-col overflow-hidden border-b border-[#7d7d7d]">
        <div className="flex h-[74px] items-center">
          <EdgeGrip />
          {["dataSource", "geopackage", "shapefile", "spatialite", "memory", "mesh", "virtual"].map((n) => <Tool key={n} name={n} />)}
          <Grip className="w-[33px] pl-4" />
          <div className="relative"><Tool name="pencils" dim />
            <svg className="absolute top-[43px] left-[48px]" width="12" height="7" viewBox="0 0 12 7"><path d="M0 0h12L6 7z" fill="#c4c4c4" /></svg>
          </div>
          <Tool name="pencil" /><Tool name="saveEdits" dim /><Tool name="digitize" dim /><Arrow className="w-[22px]" />
          <Tool name="blob" dim /><Tool name="vertex" dim /><Arrow className="w-[24px]" />
          {["table", "trash", "cut", "copy", "paste", "undo", "redo"].map((n) => <Tool key={n} name={n} dim />)}
          <Grip className="w-[32px] pl-[18px]" />
          <Tool name="label" /><Tool name="diagram" /><Sep /><Tool name="labelPin" /><Tool name="labelRed" /><Sep />
          <Tool name="labelPinDim" dim /><Tool name="labelEye" dim /><Tool name="labelEye" dim />
        </div>
        <div className="mt-px h-0.5 w-full shrink-0 bg-[#262626]" />
      </div>

      {/* freehand georeferencer toolbar */}
      <div className="flex h-[79px] shrink-0 flex-col">
        <div className="flex h-[72px] items-center pt-0.5">
          <EdgeGrip />
          <Square className="bg-[#ffc0cb] text-[#ff2020]">AD</Square>
          <Square className="bg-[#90ee90] text-[#e0905f]">MO</Square>
          <Square className="bg-[#800080] text-[#ff7a10]">RO</Square>
          <div className="ml-[1px] flex h-[44px] w-[170px] shrink-0 items-stretch rounded-md border-2 border-[#282828] bg-[#1e1e1e]">
            <span className="flex flex-1 items-center pl-2 text-[26px] text-[#e0e0e0]">0.000</span>
            <div className="flex w-[27px] flex-col items-center justify-center gap-[9px] rounded-r-md border-2 border-[#525252] bg-[#3b3b3b]">
              <svg width="15" height="8" viewBox="0 0 15 8"><path d="M0 8h15L7.500 0z" fill="#bdbdbd" /></svg>
              <svg width="15" height="8" viewBox="0 0 15 8"><path d="M0 0h15L7.500 8z" fill="#bdbdbd" /></svg>
            </div>
          </div>
          <div className="w-px" />
          <Square className="bg-[#ffff00] text-[#1f9a10]">SC</Square>
          <Square className="bg-[#8b2222] text-[#d8b8b8]">ADJ</Square>
          <Square className="rounded-none bg-[#66cdaa] text-[#e0409a] shadow-[0_0_0_4px_#383838,0_0_0_7px_#555,0_0_0_9px_#272727]">2P</Square>
          <Square className="bg-white text-[#222]">T-</Square>
          <Square className="bg-black text-[#ddd]">T+</Square>
          <Square className="bg-[#adff2f] text-[#ff3000]">!!</Square>
          <div className="flex w-[66px] justify-center pl-0.5">
            <svg width="46" height="48" viewBox="0 0 46 48">
              <path d="M0 0h46v48H0z" fill="#000080" />
              <path d="M0 18L19 2v10c17 0 27 11 26 33-4-13-12-19-26-19v8z" fill="#4169e1" />
            </svg>
          </div>
        </div>
        <div className="mt-px h-px w-full bg-[#242424]" />
        <div className="h-[2px] w-full bg-[#7a7a7a]" />
        <div className="h-[3px] w-full bg-[#2b2b2b]" />
      </div>

      <div className="flex h-[1422px] shrink-0">
        {/* docks */}
        <div className="flex w-[572px] shrink-0 flex-col overflow-hidden">
          <div className="-mr-3 h-[99px] shrink-0">
            <DockTitle text="Browser" className="-ml-[5px]" />
            <div className="-ml-[7px] flex h-[64px] items-center">
              {["addLayer", "refresh", "funnel", "collapse", "info"].map((n) => <PanelTool key={n} name={n} />)}
            </div>
          </div>
          <div className="flex h-[565px] shrink-0 border-t border-[#272727] bg-[#1e1e1e]">
            <div className="flex-1 overflow-hidden">
              {tree.map(([icon, text, open]) => (
                <div key={text} className="flex h-9 items-center">
                  <div className="w-[26px]">
                    {open && <svg width="8" height="18" viewBox="0 0 8 18"><path d="M0 0l8 9-8 9z" fill="#b4b4b4" /></svg>}
                  </div>
                  <Svg size={32}>{icons[icon]}</Svg>
                  <span className="ml-3 text-[25px] leading-9 tracking-[0.4px] whitespace-nowrap text-[#e0e0e0]">{text}</span>
                </div>
              ))}
            </div>
            <div className="flex w-[27px] flex-col bg-[#383838]">
              <ScrollButton up />
              <div className="mt-px h-[422px] border-2 border-[#525252] bg-[#404040]" />
              <div className="flex-1" />
              <ScrollButton />
            </div>
          </div>
          <div className="flex h-4 shrink-0 items-center justify-center gap-[2px] pr-[6px]">
            {[0, 1, 2, 3, 4, 5].map((i) => <i key={i} className="block size-1 bg-[#777]" />)}
          </div>
          <div className="-mr-3 h-[99px] shrink-0">
            <DockTitle text="Layers" className="-ml-[7px]" />
            <div className="-ml-[7px] flex h-[64px] items-center">
              <PanelTool name="brush" /><PanelTool name="addGroup" /><PanelTool name="eye" /><PanelTool name="funnelMenu" /><PanelTool name="exprFilter" />
              <Arrow className="w-[24px]" />
              <PanelTool name="expand" /><PanelTool name="collapse" /><PanelTool name="removeLayer" />
            </div>
          </div>
          <div className="flex-1 bg-[#1e1e1e]">
            <div className="flex h-[33px] items-center bg-[#454545] pl-[34px]">
              <Check />
              <span className="-mt-0.5 ml-[13px] font-['Noto_Sans_CJK_TC',sans-serif] text-[26px] leading-[33px] font-medium tracking-[0.5px] text-white underline decoration-2 underline-offset-4">台灣行政區_黑</span>
            </div>
            <div className="flex h-[35px] items-center pl-[34px]">
              <Check />
              <div className="ml-[13px] size-[31px] bg-[#987db7]" />
              <span className="ml-[13px] text-[25.5px] font-bold text-[#e0e0e0]">tw</span>
            </div>
          </div>
        </div>
        <div className="w-4 shrink-0 border-r border-[#282828] pt-[698px] pl-2"><Dots cols={1} rows={6} /></div>
        <MapCanvas />
      </div>

      {/* status bar */}
      <div className="flex h-[60px] shrink-0 items-center pt-1.5 text-[22px] text-[#dcdcdc]">
        <div className="flex h-[48px] w-[421px] shrink-0 items-center rounded-r-md border-2 border-l-0 border-[#292929] bg-[#1e1e1e] pl-[11px]">
          <svg width="26" height="26" viewBox="0 0 26 26" fill="none" stroke="#8e8e8e" strokeWidth="2.200">
            <circle cx="10" cy="10" r="8.500" /><path d="M16 16l9 9" strokeWidth="3" />
          </svg>
          <span className="ml-[15px] text-[25px] tracking-[0.3px] whitespace-nowrap text-[#8e8e8e]">Type to locate (⌘K)</span>
        </div>
        <div className="w-[719px] shrink-0" />
        <span className="w-[123px] shrink-0 whitespace-nowrap">Coordinate</span>
        <div className="flex h-[44px] w-[221px] shrink-0 items-center rounded-md border-2 border-[#2a2a2a] bg-[#1e1e1e] pl-[15px] text-[23px] tracking-[0.5px]">25.399°,119.271°</div>
        <svg className="ml-[8px] shrink-0" width="32" height="32" viewBox="0 0 32 32">
          <g transform="rotate(-25 16 16)" stroke="#000" strokeWidth="2">
            <rect x="9" y="1" width="14" height="30" rx="7" fill="#f0ece8" />
            <path d="M9 14q7 5 14 0M16 2v12" fill="none" /><circle cx="16" cy="23" r="3" fill="#fff" />
          </g>
          <path d="M24 8h2M28 4h2M29 9h1M2 24h2" stroke="#000" strokeWidth="2" />
        </svg>
        <span className="ml-[26px] w-[65px] shrink-0 text-white">Scale</span>
        <div className="flex h-[46px] w-[184px] shrink-0 items-stretch rounded-md border-2 border-[#2a2a2a] bg-[#1e1e1e]">
          <span className="flex flex-1 items-center pl-1.5 text-[23px]">1:214589</span>
          <div className="flex w-[40px] items-center justify-center rounded-r-md border-2 border-[#4a4a4a] bg-[#383838]">
            <svg width="15" height="9" viewBox="0 0 15 9"><path d="M0 0h15L7.500 9z" fill="#1c1c1c" /></svg>
          </div>
        </div>
        <svg className="ml-[25px] shrink-0" width="24" height="32" viewBox="0 0 24 32">
          <path d="M5 16V9a7 7 0 0 1 14 0v7" fill="none" stroke="#b8b8b8" strokeWidth="3.500" />
          <rect y="15" width="24" height="16" rx="2" fill="#656565" />
        </svg>
        <span className="ml-[18px] shrink-0 whitespace-nowrap text-white">M</span>
      </div>
    </div>
  );
}
